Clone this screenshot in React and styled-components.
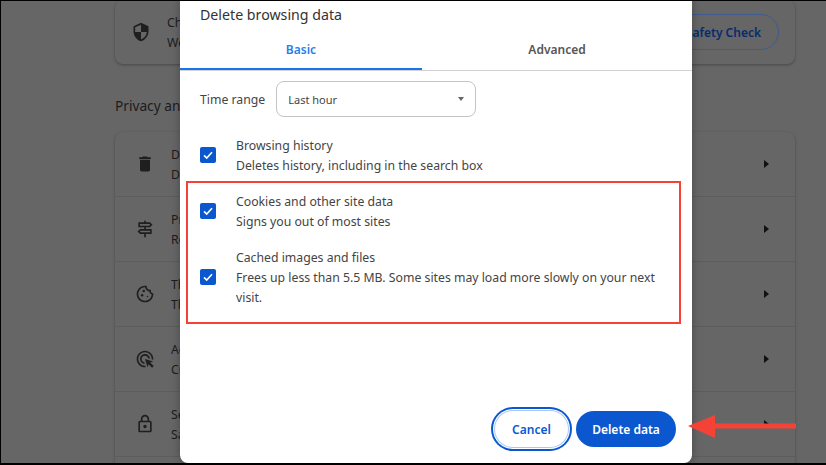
import React from "react";
import styled, { createGlobalStyle } from "styled-components";
import {
  MdSecurity,
  MdDelete,
  MdOutlineSignpost,
  MdOutlineCookie,
  MdOutlineAdsClick,
  MdOutlineLock,
} from "react-icons/md";

const Global = createGlobalStyle`
  html, body { margin: 0; padding: 0; background: #666; }
  * { box-sizing: border-box; }
`;

const FONT = `"Noto Sans", "Open Sans", Arial, sans-serif`;

const Frame = styled.div`
  position: relative;
  width: 826px;
  height: 465px;
  overflow: hidden;
  background: #666;
  font-family: ${FONT};
  font-size: 12.25px;
  color: #1c1c1c;
  border-top: 1px solid #000;
  border-left: 1px solid #000;
  border-bottom: 2px solid #000;
`;

const Settings = styled.div`
  width: 680px;
  margin-left: 114px;
  margin-top: -1px;
`;

const Card = styled.section`
  background: #666;
  border-radius: 8px;
  box-shadow: 0 1px 3px rgba(0, 0, 0, 0.3);
`;

const SafetyCard = styled(Card)`
  height: 64px;
  display: flex;
  align-items: center;
  gap: 16px;
  padding: 0 16px;
`;

const IconSlot = styled.span`
  display: flex;
  flex: none;
  font-size: 20px;
  color: #1f1f1f;
`;

const RowText = styled.div`
  flex: 1;
  min-width: 0;
  padding-top: 1px;
  line-height: 20px;
  white-space: nowrap;
  overflow: hidden;
`;

const SafetyButton = styled.div`
  flex: none;
  height: 36px;
  padding: 0 17px;
  display: flex;
  align-items: center;
  border: 1px solid #3d5b8f;
  border-radius: 18px;
  font-size: 12px;
  color: #072c6e;
  font-weight: 600;
`;

const SectionTitle = styled.h2`
  margin: 0;
  height: 68px;
  padding-top: 32px;
  font-size: 13.7px;
  font-weight: 400;
  line-height: 20px;
`;

const RowCard = styled(Card)`
  height: 400px;
`;

const Row = styled.div`
  height: 65px;
  display: flex;
  align-items: center;
  gap: 16px;
  padding: 0 26px 0 20px;
  border-bottom: 1px solid #5d5d5d;
`;

const Caret = styled.span`
  flex: none;
  width: 0;
  height: 0;
  border-top: 4px solid transparent;
  border-bottom: 4px solid transparent;
  border-left: 5px solid #111;
`;

const Modal = styled.div`
  position: absolute;
  left: 179px;
  top: -1px;
  bottom: 0;
  width: 512px;
  display: flex;
  flex-direction: column;
  background: #fff;
  border-radius: 0 0 8px 8px;
  box-shadow: 0 0 10px rgba(0, 0, 0, 0.3);
  color: #444;
`;

const ModalTitle = styled.h1`
  margin: 0;
  height: 34px;
  padding: 5px 20px 0;
  font-size: 14.2px;
  font-weight: 400;
  line-height: 20px;
  color: #333;
`;

const Tabs = styled.div`
  display: flex;
  height: 37px;
  border-bottom: 1px solid #d3d3d3;
`;

const Tab = styled.div`
  flex: ${(p) => (p.$active ? "0 0 242px" : "1")};
  height: 36px;
  display: flex;
  align-items: center;
  justify-content: center;
  padding-bottom: ${(p) => (p.$active ? "3px" : "3px")};
  font-size: 12px;
  font-weight: 600;
  color: ${(p) => (p.$active ? "#2b7de9" : "#555")};
  border-bottom: ${(p) => (p.$active ? "2px solid #1a73e8" : "2px solid transparent")};
`;

const RangeRow = styled.div`
  display: flex;
  align-items: center;
  gap: 11px;
  padding: 10px 20px 0;
`;

const RangeSelect = styled.div`
  width: 200px;
  height: 36px;
  padding: 0 11px;
  display: flex;
  align-items: center;
  justify-content: space-between;
  border: 1px solid #c4c4c4;
  border-radius: 8px;
  font-size: 11px;
`;

const SelectCaret = styled.span`
  width: 0;
  height: 0;
  border-left: 3.5px solid transparent;
  border-right: 3.5px solid transparent;
  border-top: 4px solid #666;
`;

const Options = styled.div`
  display: flex;
  flex-direction: column;
  gap: 16px;
  padding: 18px 20px 0;
`;

const Option = styled.label`
  display: flex;
  align-items: center;
  gap: 20px;
`;

const Check = styled.span`
  flex: none;
  width: 16px;
  height: 16px;
  display: flex;
  align-items: center;
  justify-content: center;
  border-radius: 2px;
  background: #0b57d0;
`;

const OptionText = styled.div`
  padding-top: 1px;
  margin-bottom: -1px;
  line-height: 20px;
`;

const Footer = styled.div`
  margin-top: auto;
  display: flex;
  justify-content: flex-end;
  gap: 8px;
  padding: 0 16px 16px;
`;

const Button = styled.div`
  height: 36px;
  display: flex;
  align-items: center;
  justify-content: center;
  border-radius: 18px;
  font-size: 12px;
  font-weight: 600;
`;

const CancelButton = styled(Button)`
  width: 73px;
  background: #fff;
  color: #0b57d0;
  box-shadow: 0 0 0 1px #a8c7fa, 0 0 0 2px #fff, 0 0 0 4px #0b57d0;
`;

const DeleteButton = styled(Button)`
  width: 100px;
  background: #0b57d0;
  color: #fff;
`;

const Highlight = styled.div`
  position: absolute;
  left: 185px;
  top: 180px;
  width: 495px;
  height: 143px;
  border: 2px solid #f44336;
`;

const ArrowMark = styled.svg`
  position: absolute;
  left: 687px;
  top: 413px;
`;

const OPTIONS = [
  ["Browsing history", "Deletes history, including in the search box"],
  ["Cookies and other site data", "Signs you out of most sites"],
  [
    "Cached images and files",
    "Frees up less than 5.5 MB. Some sites may load more slowly on your next visit.",
  ],
];

const ROWS = [
  [MdDelete, "Delete browsing data", "Delete history, cookies, cache, and more"],
  [MdOutlineSignpost, "Privacy Guide", "Review key privacy and security controls"],
  [MdOutlineCookie, "Third-party cookies", "Third-party cookies are blocked in Incognito mode"],
  [MdOutlineAdsClick, "Ads privacy", "Customize the info used by sites to show you ads"],
  [MdOutlineLock, "Security", "Safe Browsing (protection from dangerous sites) and other settings"],
];

export default function App() {
  return (
    <Frame>
      <Global />
      <Settings>
        <SafetyCard>
          <IconSlot>
            <MdSecurity />
          </IconSlot>
          <RowText>
            Chrome can help keep you safe from data breaches
            <br />
            We'll check your browser settings
          </RowText>
          <SafetyButton>Go to Safety Check</SafetyButton>
        </SafetyCard>
        <SectionTitle>Privacy and security</SectionTitle>
        <RowCard>
          {ROWS.map(([Icon, title, sub]) => (
            <Row key={title}>
              <IconSlot>
                <Icon />
              </IconSlot>
              <RowText>
                {title}
                <br />
                {sub}
              </RowText>
              <Caret />
            </Row>
          ))}
        </RowCard>
      </Settings>

      <Modal>
        <ModalTitle>Delete browsing data</ModalTitle>
        <Tabs>
          <Tab $active>Basic</Tab>
          <Tab>Advanced</Tab>
        </Tabs>
        <RangeRow>
          <span>Time range</span>
          <RangeSelect>
            Last hour
            <SelectCaret />
          </RangeSelect>
        </RangeRow>
        <Options>
          {OPTIONS.map(([title, sub]) => (
            <Option key={title}>
              <Check>
                <svg width="12" height="12" viewBox="0 0 12 12" fill="none">
                  <path d="M2 6.4 4.7 9 10 3.2" stroke="#fff" strokeWidth="1.6" />
                </svg>
              </Check>
              <OptionText>
                {title}
                <br />
                {sub}
              </OptionText>
            </Option>
          ))}
        </Options>
        <Footer>
          <CancelButton>Cancel</CancelButton>
          <DeleteButton>Delete data</DeleteButton>
        </Footer>
      </Modal>

      <Highlight />
      <ArrowMark width="110" height="26" viewBox="0 0 110 26">
        <path d="M0 12 L27 1 V9.5 H108 V14.5 H27 V24 Z" fill="#f44336" />
      </ArrowMark>
    </Frame>
  );
}
